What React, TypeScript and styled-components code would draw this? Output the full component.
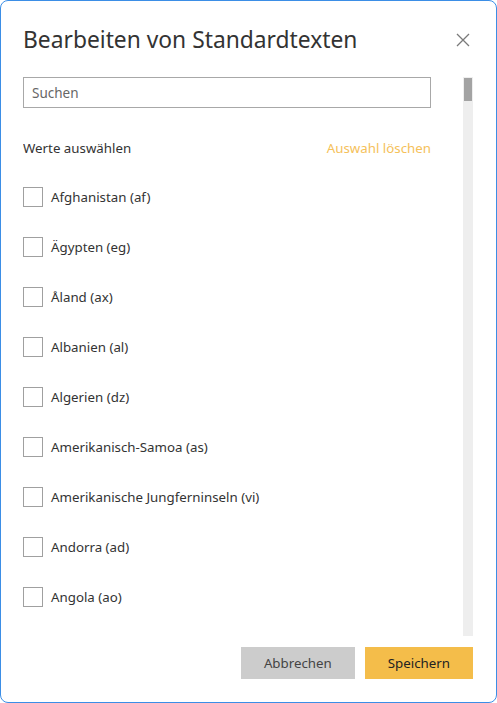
import React from 'react';
import styled, { createGlobalStyle } from 'styled-components';

const GlobalStyle = createGlobalStyle`
  html, body {
    margin: 0;
    padding: 0;
    background: #ffffff;
  }
  * {
    box-sizing: border-box;
  }
`;

// only the part of the list that fits in the dialog
const COUNTRIES: [string, string][] = [
  ['Afghanistan', 'af'],
  ['Ägypten', 'eg'],
  ['Åland', 'ax'],
  ['Albanien', 'al'],
  ['Algerien', 'dz'],
  ['Amerikanisch-Samoa', 'as'],
  ['Amerikanische Jungferninseln', 'vi'],
  ['Andorra', 'ad'],
  ['Angola', 'ao'],
];

function App() {
  const [selected, setSelected] = React.useState<string[]>([]);
  const [query, setQuery] = React.useState('');

  const toggle = (code: string) => {
    setSelected((prev) => (prev.includes(code) ? prev.filter((c) => c !== code) : [...prev, code]));
  };

  const visible = COUNTRIES.filter(([name]) => name.toLowerCase().includes(query.toLowerCase()));

  return (
    <>
      <GlobalStyle />
      <Dialog>
        <Header>
          <Title>Bearbeiten von Standardtexten</Title>
          <CloseButton aria-label="Schließen">
            <svg width="14" height="14" viewBox="0 0 14 14">
              <path d="M1 1 L13 13 M13 1 L1 13" stroke="#7a7a7a" strokeWidth="1.3" fill="none" />
            </svg>
          </CloseButton>
        </Header>

        <Body>
          <Content>
            <SearchInput
              placeholder="Suchen"
              value={query}
              onChange={(e) => setQuery(e.target.value)}
            />
            <ListHeader>
              <ListLabel>Werte auswählen</ListLabel>
              <ClearLink onClick={() => setSelected([])}>Auswahl löschen</ClearLink>
            </ListHeader>
            <List>
              {visible.map(([name, code]) => (
                <Row key={code}>
                  <Checkbox
                    type="checkbox"
                    checked={selected.includes(code)}
                    onChange={() => toggle(code)}
                  />
                  <RowLabel>
                    {name} ({code})
                  </RowLabel>
                </Row>
              ))}
            </List>
          </Content>
          <ScrollTrack>
            <ScrollThumb />
          </ScrollTrack>
        </Body>

        <Footer>
          <Button $variant="secondary">Abbrechen</Button>
          <Button $variant="primary">Speichern</Button>
        </Footer>
      </Dialog>
    </>
  );
}

export default App;

const Dialog = styled.div`
  height: 703px;
  width: 497px;
  display: flex;
  flex-direction: column;
  border: 1px solid #3b8ee6;
  border-radius: 8px;
  padding: 23px 23px 23px 22px;
  font-family: 'Noto Sans', 'Open Sans', sans-serif;
  color: #333333;
  background: #ffffff;
  overflow: hidden;
`;

const Header = styled.div`
  display: flex;
  align-items: center;
  justify-content: space-between;
  height: 34px;
  margin-bottom: 19px;
`;

const Title = styled.h1`
  margin: 0;
  font-size: 22.8px;
  font-weight: 400;
  line-height: 34px;
  color: #333333;
  margin-top: -2px;
`;

const CloseButton = styled.button`
  display: flex;
  align-items: center;
  justify-content: center;
  width: 20px;
  height: 20px;
  padding: 0;
  margin-top: -2px;
  border: none;
  background: none;
  cursor: pointer;
`;

const Body = styled.div`
  flex: 1;
  min-height: 0;
  display: flex;
  gap: 32px;
`;

const Content = styled.div`
  flex: 1;
  min-width: 0;
  overflow: hidden;
`;

const ScrollTrack = styled.div`
  width: 10px;
  flex-shrink: 0;
  background: #eeeeee;
  padding: 1px;
`;

const ScrollThumb = styled.div`
  height: 23px;
  background: #a3a3a3;
`;

const SearchInput = styled.input`
  display: block;
  width: 100%;
  height: 31px;
  padding: 0 8px;
  border: 1px solid #a8a8a8;
  border-radius: 0;
  font-family: inherit;
  font-size: 13.5px;
  color: #333333;
  outline: none;

  &::placeholder {
    color: #666666;
  }
`;

const ListHeader = styled.div`
  display: flex;
  align-items: center;
  justify-content: space-between;
  padding: 28px 0 12px;
  line-height: 24px;
  font-size: 13.3px;
`;

const ListLabel = styled.span`
  color: #333333;
`;

const ClearLink = styled.span`
  color: #f5c15a;
  cursor: pointer;
`;

const List = styled.div`
  display: flex;
  flex-direction: column;
`;

const Row = styled.label`
  display: flex;
  align-items: center;
  gap: 8px;
  height: 50px;
  cursor: pointer;
`;

const Checkbox = styled.input`
  appearance: none;
  width: 20px;
  height: 20px;
  margin: 0;
  border: 1px solid #a0a0a0;
  background: #ffffff;
  flex-shrink: 0;

  &:checked {
    background: #f4bd4a;
    border-color: #f4bd4a;
  }
`;

const RowLabel = styled.span`
  font-size: 13.3px;
  color: #333333;
`;

const Footer = styled.div`
  display: flex;
  justify-content: flex-end;
  gap: 10px;
  margin-top: 11px;
`;

const Button = styled.button<{ $variant: 'primary' | 'secondary' }>`
  height: 32px;
  padding: 0 23px;
  border: none;
  border-radius: 0;
  font-family: inherit;
  font-size: 13.3px;
  cursor: pointer;
  background: ${(p) => (p.$variant === 'primary' ? '#f4bd4a' : '#cccccc')};
  color: ${(p) => (p.$variant === 'primary' ? '#222222' : '#444444')};
`;
